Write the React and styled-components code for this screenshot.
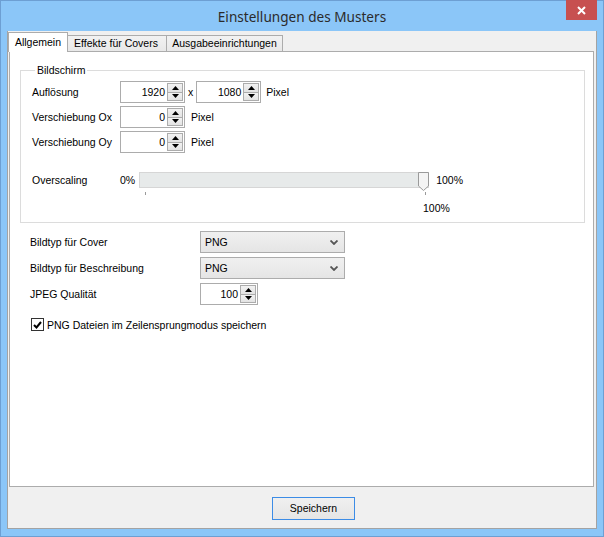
import React from 'react'
import styled, { createGlobalStyle } from 'styled-components'

const GlobalStyle = createGlobalStyle`
  html, body { margin: 0; padding: 0; overflow: hidden; }
  body { font-family: "Liberation Sans", Arial, sans-serif; font-size: 10.5px; color: #000; }
  * { box-sizing: border-box; }
`

const Window = styled.div`
  width: 604px;
  height: 537px;
  background: #8bc6f8;
  border: 1px solid #6d9fd3;
  padding: 0 6px 7px 6px;
  display: flex;
  flex-direction: column;
`

const TitleBar = styled.div`
  height: 30px;
  display: grid;
  grid-template-columns: 1fr auto 1fr;
  align-items: start;
`

const Title = styled.div`
  grid-column: 2;
  font-family: "Noto Sans", "Open Sans", sans-serif;
  font-size: 13.6px;
  color: #2b2b2b;
  line-height: 30px;
  padding-top: 1px;
`

const CloseBtn = styled.div`
  justify-self: end;
  width: 31px;
  height: 20px;
  margin-top: -1px;
  background: #c75050;
  display: flex;
  align-items: center;
  justify-content: center;
`

const Client = styled.div`
  flex: 1;
  background: #f0f0f0;
  border: 1px solid #a3a3a3;
  border-top: none;
  display: flex;
  flex-direction: column;
`

const TabBar = styled.div`
  display: flex;
  align-items: flex-end;
  margin-top: 1px;
  padding-left: 2px;
  height: 20px;
`

const Tab = styled.div`
  position: relative;
  width: ${p => p.w}px;
  text-align: center;
  height: ${p => (p.active ? '20px' : '17px')};
  margin: ${p => (p.active ? '0 -2px 0 -2px' : '0 0 0 -1px')};
  z-index: ${p => (p.active ? 1 : 0)};
  background: ${p => (p.active ? '#fff' : 'linear-gradient(#f2f2f2, #e8e8e8)')};
  border: 1px solid #acacac;
  border-bottom: ${p => (p.active ? 'none' : '1px solid #acacac')};
  line-height: ${p => (p.active ? '19px' : '15px')};
  white-space: nowrap;
  &:first-child { margin-left: -2px; }
`

const Pane = styled.div`
  flex: 1;
  background: #fff;
  border: 1px solid #acacac;
  margin: -1px 2px 0 1px;
  display: flex;
  flex-direction: column;
`

const Group = styled.fieldset`
  margin: 12px 8px 0 10px;
  padding: 4px 0 8px 11px;
  border: 1px solid #dcdcdc;
  min-width: 0;
`

const Legend = styled.legend`
  padding: 0 2px;
  margin-left: 3px;
  line-height: 13px;
`

const Rows = styled.div`
  display: flex;
  flex-direction: column;
  gap: ${p => p.gap}px;
`

const Row = styled.div`
  display: flex;
  align-items: center;
  height: 22px;
`

const Label = styled.div`
  width: ${p => p.w}px;
  flex-shrink: 0;
  white-space: nowrap;
`

const Spin = styled.div`
  width: ${p => p.w}px;
  height: 22px;
  margin-left: ${p => p.ml || 0}px;
  border: 1px solid #acacac;
  background: #fff;
  display: flex;
  align-items: stretch;
  padding: 1px;
`

const SpinValue = styled.div`
  flex: 1;
  text-align: right;
  line-height: 18px;
  padding-right: 2px;
`

const SpinButtons = styled.div`
  width: 16px;
  display: flex;
  flex-direction: column;
`

const SpinBtn = styled.div`
  flex: 1;
  border: 1px solid #acacac;
  background: linear-gradient(#f2f2f2, #e3e3e3);
  display: flex;
  align-items: center;
  justify-content: center;
  & + & { border-top: none; }
`

const Unit = styled.span`
  margin-left: ${p => p.ml}px;
  white-space: nowrap;
`

const SliderRow = styled.div`
  display: flex;
  align-items: center;
  margin-top: 19px;
  height: 16px;
`

const Track = styled.div`
  position: relative;
  width: 290px;
  height: 16px;
  margin-left: 4px;
  background: #e7eaea;
  border: 1px solid #d6d6d6;
`

const Thumb = styled.svg`
  position: absolute;
  right: -1px;
  top: -1px;
`

const Ticks = styled.div`
  display: flex;
  justify-content: space-between;
  width: 281px;
  margin: 4px 0 0 113px;
`

const TickMark = styled.div`
  width: 1px;
  height: 3px;
  background: #9a9a9a;
`

const TickLabel = styled.div`
  margin: 8px 0 0 391px;
  line-height: 11px;
`

const Form = styled.div`
  margin-top: 8px;
  padding-left: 20px;
`

const Combo = styled.div`
  width: 145px;
  height: 22px;
  border: 1px solid #acacac;
  background: linear-gradient(#f0f0f0, #e5e5e5);
  display: flex;
  align-items: center;
  justify-content: space-between;
  padding: 0 6px 0 4px;
`

const CheckRow = styled.label`
  display: flex;
  align-items: center;
  gap: 3px;
  margin: 13px 0 0 1px;
`

const CheckBox = styled.div`
  width: 13px;
  height: 13px;
  border: 1px solid #333;
  background: #fff;
  display: flex;
  align-items: center;
  justify-content: center;
`

const Footer = styled.div`
  height: 41px;
  display: flex;
  align-items: center;
  justify-content: center;
  padding: 1px 0 0 23px;
`

const Button = styled.button`
  width: 83px;
  height: 23px;
  border: 1px solid #3c8ce6;
  background: linear-gradient(#f0f0f0, #e5e5e5);
  font-family: "Liberation Sans", Arial, sans-serif;
  font-size: 10.5px;
  color: #000;
  padding: 0;
`

const Arrow = ({ up }) => (
  <svg width="7" height="4" viewBox="0 0 7 4">
    <path d={up ? 'M0 4 L3.5 0 L7 4 Z' : 'M0 0 L7 0 L3.5 4 Z'} fill="#000" />
  </svg>
)

const SpinBox = ({ value, w, ml }) => (
  <Spin w={w} ml={ml}>
    <SpinValue>{value}</SpinValue>
    <SpinButtons>
      <SpinBtn><Arrow up /></SpinBtn>
      <SpinBtn><Arrow /></SpinBtn>
    </SpinButtons>
  </Spin>
)

const Chevron = () => (
  <svg width="8" height="5" viewBox="0 0 8 5">
    <path d="M0.5 0.5 L4 4 L7.5 0.5" stroke="#555" strokeWidth="1.8" fill="none" />
  </svg>
)

export default function App() {
  return (
    <>
      <GlobalStyle />
      <Window>
        <TitleBar>
          <Title>Einstellungen des Musters</Title>
          <CloseBtn>
            <svg width="9" height="9" viewBox="0 0 9 9">
              <path d="M1 1 L8 8 M8 1 L1 8" stroke="#fff" strokeWidth="2" />
            </svg>
          </CloseBtn>
        </TitleBar>
        <Client>
          <TabBar>
            <Tab active w={60}>Allgemein</Tab>
            <Tab w={102}>Effekte für Covers</Tab>
            <Tab w={117}>Ausgabeeinrichtungen</Tab>
          </TabBar>
          <Pane>
            <Group>
              <Legend>Bildschirm</Legend>
              <Rows gap={3}>
                <Row>
                  <Label w={88}>Auflösung</Label>
                  <SpinBox value="1920" w={65} />
                  <Unit ml={3}>x</Unit>
                  <SpinBox value="1080" w={65} ml={3} />
                  <Unit ml={5}>Pixel</Unit>
                </Row>
                <Row>
                  <Label w={88}>Verschiebung Ox</Label>
                  <SpinBox value="0" w={65} />
                  <Unit ml={6}>Pixel</Unit>
                </Row>
                <Row>
                  <Label w={88}>Verschiebung Oy</Label>
                  <SpinBox value="0" w={65} />
                  <Unit ml={6}>Pixel</Unit>
                </Row>
              </Rows>
              <SliderRow>
                <Label w={88}>Overscaling</Label>
                <span>0%</span>
                <Track>
                  <Thumb width="11" height="19" viewBox="0 0 11 19">
                    <path d="M0.5 0.5 H10.5 V14 L5.5 18.5 L0.5 14 Z" fill="#f4f4f4" stroke="#9a9a9a" />
                  </Thumb>
                </Track>
                <Unit ml={7}>100%</Unit>
              </SliderRow>
              <Ticks>
                <TickMark />
                <TickMark />
              </Ticks>
              <TickLabel>100%</TickLabel>
            </Group>
            <Form>
              <Rows gap={4}>
                <Row>
                  <Label w={170}>Bildtyp für Cover</Label>
                  <Combo><span>PNG</span><Chevron /></Combo>
                </Row>
                <Row>
                  <Label w={170}>Bildtyp für Beschreibung</Label>
                  <Combo><span>PNG</span><Chevron /></Combo>
                </Row>
                <Row>
                  <Label w={170}>JPEG Qualität</Label>
                  <SpinBox value="100" w={58} />
                </Row>
              </Rows>
              <CheckRow>
                <CheckBox>
                  <svg width="9" height="8" viewBox="0 0 9 8">
                    <path d="M1 4 L3.5 6.5 L8 1" stroke="#000" strokeWidth="2" fill="none" />
                  </svg>
                </CheckBox>
                <span>PNG Dateien im Zeilensprungmodus speichern</span>
              </CheckRow>
            </Form>
          </Pane>
          <Footer>
            <Button>Speichern</Button>
          </Footer>
        </Client>
      </Window>
    </>
  )
}
